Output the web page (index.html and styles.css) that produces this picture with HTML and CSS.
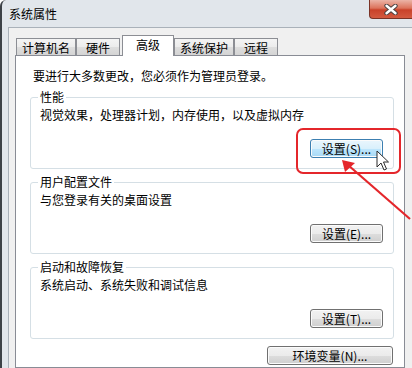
FILE: index.html
```html
<!DOCTYPE html>
<html lang="zh-CN">
<head>
    <meta charset="UTF-8">
    <meta name="viewport" content="width=device-width, initial-scale=1.0">
    <title>系统属性</title>
    <link rel="stylesheet" href="styles.css">
</head>
<body>
    <div class="stage">
        <div class="window">
            <div class="titlebar">
                <span class="title">系统属性</span>
                <div class="close">
                    <svg width="14" height="11" viewBox="0 0 14 11">
                        <path d="M2.5 1.8 L11.5 9.2 M11.5 1.8 L2.5 9.2" stroke="#4b4040" stroke-width="4.4" stroke-linecap="round"/>
                        <path d="M2.5 1.8 L11.5 9.2 M11.5 1.8 L2.5 9.2" stroke="#ffffff" stroke-width="2.4" stroke-linecap="round"/>
                    </svg>
                </div>
            </div>
            <div class="client">
                <div class="tabs">
                    <div class="tab">计算机名</div>
                    <div class="tab">硬件</div>
                    <div class="tab active">高级</div>
                    <div class="tab">系统保护</div>
                    <div class="tab">远程</div>
                </div>
                <div class="panel">
                    <p class="notice">要进行大多数更改，您必须作为管理员登录。</p>

                    <fieldset class="group">
                        <legend>性能</legend>
                        <p>视觉效果，处理器计划，内存使用，以及虚拟内存</p>
                        <div class="actions"><button class="btn hot">设置(S)...</button></div>
                    </fieldset>

                    <fieldset class="group">
                        <legend>用户配置文件</legend>
                        <p>与您登录有关的桌面设置</p>
                        <div class="actions"><button class="btn">设置(E)...</button></div>
                    </fieldset>

                    <fieldset class="group">
                        <legend>启动和故障恢复</legend>
                        <p>系统启动、系统失败和调试信息</p>
                        <div class="actions"><button class="btn">设置(T)...</button></div>
                    </fieldset>

                    <div class="env-actions"><button class="btn wide">环境变量(N)...</button></div>
                </div>
            </div>
        </div>

        <!-- annotation over the screenshot -->
        <div class="highlight"></div>
        <svg class="arrow" width="412" height="368" viewBox="0 0 412 368">
            <line x1="410" y1="219" x2="348" y2="165" stroke="#e4262b" stroke-width="2.2"/>
            <polygon points="342,160 355,163 345,172" fill="#e4262b"/>
        </svg>
        <svg class="cursor" width="14" height="22" viewBox="0 0 14 22">
            <path d="M1 1 V17 L5 13 L8 20 L10.5 19 L7.5 12 H12.5 Z" fill="#ffffff" stroke="#2b2b2b" stroke-width="1" stroke-linejoin="round"/>
        </svg>
    </div>
</body>
</html>
```

FILE: styles.css
```css
body {
    margin: 0;
    font-family: "Noto Sans CJK SC", "Noto Sans", sans-serif;
    font-size: 12px;
    color: #000;
    background: #fff;
}

.stage {
    position: relative;
    width: 412px;
    height: 368px;
    overflow: hidden;
}

.window {
    width: 412px;
    height: 368px;
    box-sizing: border-box;
    border-left: 2px solid #3d4247;
    border-top-left-radius: 6px;
    background: #e1e6eb;
    display: flex;
    flex-direction: column;
}

.titlebar {
    height: 27px;
    flex-shrink: 0;
    display: flex;
    align-items: flex-start;
}

.title {
    padding: 7px 0 0 7px;
    line-height: 14px;
}

.close {
    margin-left: auto;
    width: 43px;
    height: 19px;
    box-sizing: border-box;
    border-left: 1px solid #7a3326;
    border-bottom: 1px solid #7a3326;
    border-bottom-left-radius: 4px;
    background: linear-gradient(#ebb4a7, #dc735c 45%, #c9422a 55%, #d35a40);
    display: flex;
    align-items: center;
    justify-content: center;
}

.client {
    flex: 1;
    margin-left: 6px;
    border-top: 1px solid #a9b1b9;
    border-left: 1px solid #a9b1b9;
    background: #f0f0f0;
    padding: 7px 0 0 6px;
    display: flex;
    flex-direction: column;
}

.tabs {
    height: 20px;
    flex-shrink: 0;
    display: flex;
    align-items: flex-end;
    padding-left: 1px;
}

.tab {
    height: 17px;
    box-sizing: border-box;
    min-width: 44px;
    padding: 2px 5px 0;
    line-height: 14px;
    text-align: center;
    border: 1px solid #8c8e94;
    border-bottom: none;
    background: linear-gradient(#f4f4f4, #ececec 50%, #dedede 51%, #d4d4d4);
}

.tab.active {
    height: 21px;
    min-width: 52px;
    margin: 0 0 -1px 2px;
    padding-top: 2px;
    background: #fff;
    position: relative;
    z-index: 1;
}

.panel {
    flex: 1;
    width: 390px;
    box-sizing: border-box;
    border: 1px solid #898c95;
    background: #fff;
    padding: 13px 10px 0 14px;
}

.panel p {
    margin: 0;
    line-height: 14px;
}

.notice {
    padding-left: 3px;
    margin-bottom: 7px !important;
}

.group {
    margin: 0 0 6px;
    padding: 4px 10px 10px 9px;
    border: 1px solid #d5dfe5;
    border-radius: 3px;
    min-width: 0;
}

.group legend {
    padding: 0 2px;
    margin-left: -2px;
    line-height: 14px;
}

.actions {
    margin-top: 17px;
    text-align: right;
    line-height: 0;
}

.env-actions {
    margin-top: 7px;
    padding-right: 1px;
    text-align: right;
    line-height: 0;
}

.btn {
    width: 73px;
    height: 19px;
    padding: 0;
    font-family: inherit;
    font-size: 12px;
    line-height: 17px;
    color: #000;
    border: 1px solid #707070;
    border-radius: 3px;
    background: linear-gradient(#f2f2f2, #ebebeb 50%, #dddddd 51%, #cfcfcf);
    box-shadow: inset 0 0 0 1px #fbfbfb;
}

.btn.hot {
    border-color: #3c7fb1;
    background: linear-gradient(#eaf6fd, #d9f0fc 50%, #bee6fd 51%, #a7d9f5);
}

.btn.wide {
    width: 126px;
}

.highlight {
    position: absolute;
    left: 296px;
    top: 128px;
    width: 105px;
    height: 46px;
    box-sizing: border-box;
    border: 2px solid #e4262b;
    border-radius: 7px;
}

.arrow {
    position: absolute;
    left: 0;
    top: 0;
}

.cursor {
    position: absolute;
    left: 376px;
    top: 150px;
}
```
